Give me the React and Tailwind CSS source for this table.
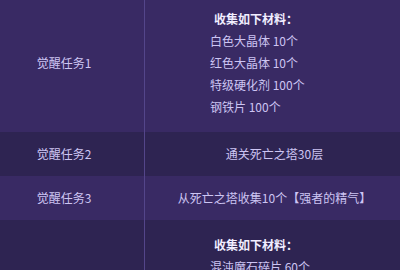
const rows = [
  {
    label: '觉醒任务1',
    title: '收集如下材料：',
    items: ['白色大晶体 10个', '红色大晶体 10个', '特级硬化剂 100个', '钢铁片 100个'],
  },
  { label: '觉醒任务2', text: '通关死亡之塔30层' },
  { label: '觉醒任务3', text: '从死亡之塔收集10个【强者的精气】' },
  {
    label: '觉醒任务4',
    title: '收集如下材料：',
    items: ['混沌魔石碎片 60个', '无色小晶块 500个', '黑曜石 50个'],
  },
]

export default function App() {
  return (
    <div
      className="w-[400px] h-[270px] overflow-hidden bg-[#2e2452] text-[12px] leading-[22px] text-[#cdc5f3]"
      style={{ fontFamily: '"Noto Sans CJK SC", "Microsoft YaHei", sans-serif' }}
    >
      <div className="-mt-[6px]">
        {rows.map((row, i) => (
          <div
            key={i}
            className={`flex ${i % 2 === 0 ? 'bg-[#392a64]' : 'bg-[#2e2452]'}`}
          >
            <div className="w-[145px] shrink-0 flex items-center justify-center pr-4 border-r border-[#54468a]">
              {row.label}
            </div>
            {row.items ? (
              <div className="flex-1 pl-[65px] py-[14px]">
                <div className="pl-1 font-bold text-[#f1eeff]">{row.title}</div>
                {row.items.map((item) => (
                  <div key={item}>{item}</div>
                ))}
              </div>
            ) : (
              <div className="flex-1 flex items-center justify-center h-[44px] pl-1">
                {row.text}
              </div>
            )}
          </div>
        ))}
      </div>
    </div>
  )
}
